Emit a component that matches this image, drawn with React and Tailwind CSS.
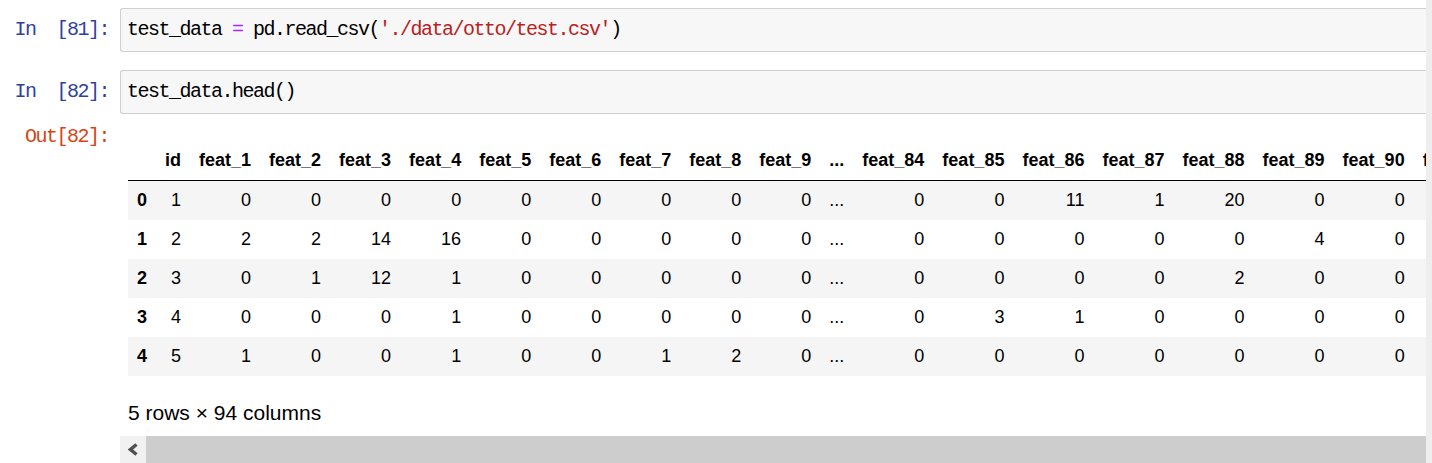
// Jupyter notebook fragment: two input cells and a pandas DataFrame output.
const MONO = { fontFamily: '"Liberation Mono", "DejaVu Sans Mono", monospace' };

const COLS = [
  "id",
  "feat_1", "feat_2", "feat_3", "feat_4", "feat_5", "feat_6", "feat_7", "feat_8", "feat_9",
  "...",
  "feat_84", "feat_85", "feat_86", "feat_87", "feat_88", "feat_89", "feat_90", "feat_91",
];

const ROWS = [
  [1, 0, 0, 0, 0, 0, 0, 0, 0, 0, "...", 0, 0, 11, 1, 20, 0, 0, 0],
  [2, 2, 2, 14, 16, 0, 0, 0, 0, 0, "...", 0, 0, 0, 0, 0, 4, 0, 0],
  [3, 0, 1, 12, 1, 0, 0, 0, 0, 0, "...", 0, 0, 0, 0, 2, 0, 0, 0],
  [4, 0, 0, 0, 1, 0, 0, 0, 0, 0, "...", 0, 3, 1, 0, 0, 0, 0, 0],
  [5, 1, 0, 0, 1, 0, 0, 1, 2, 0, "...", 0, 0, 0, 0, 0, 0, 0, 0],
];

function Prompt({ children, color }) {
  return (
    <div
      style={MONO}
      className={`w-[120px] shrink-0 pr-[11px] text-right text-[20px] tracking-[-1.5px] whitespace-pre ${color}`}
    >
      {children}
    </div>
  );
}

function InputCell({ n, children }) {
  return (
    <div className="flex h-[44px] items-center">
      <Prompt color="text-[#303F9F]">{`In\u00a0\u00a0[${n}]:`}</Prompt>
      <div
        style={MONO}
        className="flex h-full flex-1 items-center rounded-l-[3px] border border-r-0 border-[#cfcfcf] bg-[#f7f7f7] pl-[6px] text-[20px] tracking-[-1.5px] whitespace-pre text-black"
      >
        {children}
      </div>
    </div>
  );
}

function DataFrame() {
  return (
    <table
      className="border-collapse text-[18px] leading-[21px] text-black whitespace-nowrap"
      style={{ fontFamily: '"Liberation Sans", Arial, sans-serif' }}
    >
      <thead>
        <tr className="border-b border-black">
          <th className="px-[9px] py-[9px]" />
          {COLS.map((c) => (
            <th key={c} className="px-[9px] py-[9px] text-right font-bold">
              {c}
            </th>
          ))}
        </tr>
      </thead>
      <tbody>
        {ROWS.map((row, i) => (
          <tr key={i} className={i % 2 === 0 ? "bg-[#f5f5f5]" : "bg-white"}>
            <th className="px-[9px] py-[9px] text-right font-bold">{i}</th>
            {row.map((v, j) => (
              <td key={j} className="px-[9px] py-[9px] text-right">
                {v}
              </td>
            ))}
          </tr>
        ))}
      </tbody>
    </table>
  );
}

function ScrollBar() {
  return (
    <div className="flex h-[27px]">
      <div className="flex w-[26px] items-center justify-center bg-[#f1f1f1]">
        <svg width="11" height="13" viewBox="0 0 11 13">
          <polyline
            points="8.5,1.5 2.5,6.5 8.5,11.5"
            fill="none"
            stroke="#505050"
            strokeWidth="3.4"
            strokeLinejoin="miter"
          />
        </svg>
      </div>
      <div className="flex-1 bg-[#cdcdcd]" />
    </div>
  );
}

export default function App() {
  return (
    <div className="flex h-[463px] w-[1432px] overflow-hidden bg-white">
      <div className="w-[1426px] shrink-0 overflow-hidden pt-[8px]">
        <InputCell n={81}>
          test_data <span className="text-[#AA22FF]">=</span> pd.read_csv(
          <span className="text-[#BA2121]">'./data/otto/test.csv'</span>)
        </InputCell>
        <div className="h-[18px]" />
        <InputCell n={82}>test_data.head()</InputCell>
        <div className="mt-[8px] flex">
          <div className="mt-[2px] h-[25px] leading-[25px]">
            <Prompt color="text-[#D84315]">Out[82]:</Prompt>
          </div>
          <div className="min-w-0 flex-1 overflow-hidden">
            <div className="pb-[11.5px] pl-[8px] pt-[19px]">
              <DataFrame />
              <p
                className="mt-[24.5px] text-[21px] leading-[24px] text-black"
                style={{ fontFamily: '"Liberation Sans", Arial, sans-serif' }}
              >
                5 rows × 94 columns
              </p>
            </div>
            <ScrollBar />
          </div>
        </div>
      </div>
      <div className="flex-1 bg-[#eeeeee]" />
    </div>
  );
}
